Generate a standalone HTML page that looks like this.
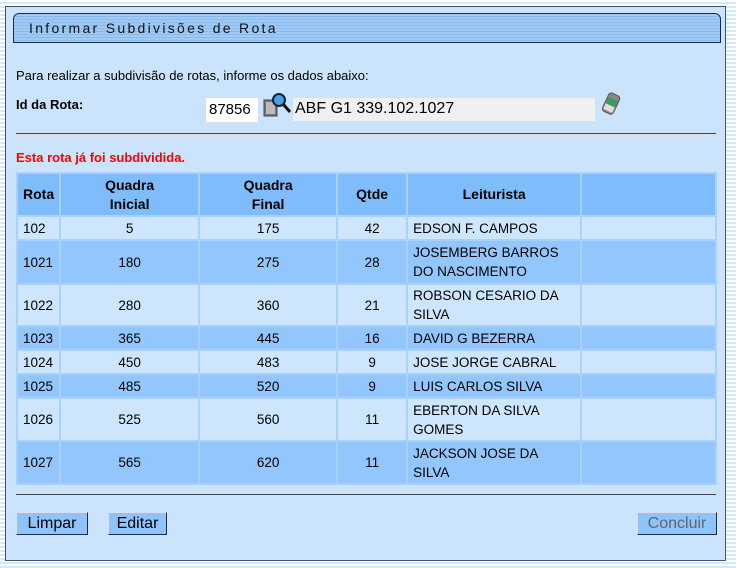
<!DOCTYPE html>
<html><head><meta charset="utf-8"><style>
*{margin:0;padding:0;box-sizing:border-box}
body{width:736px;height:568px;overflow:hidden;font-family:"Liberation Sans",Arial,sans-serif;font-size:13px;color:#000;
background:repeating-linear-gradient(#fff 0 2px,#d4e8fb 2px 4px);position:relative}
.panel{position:absolute;left:5px;top:6px;width:721px;height:555px;background:#cbe4fc;border:1px solid #3d5570}
.title{position:absolute;left:7px;top:6px;width:708px;height:30px;border:1px solid #1c2c40;border-radius:6px 6px 0 0;
background:repeating-linear-gradient(#9fcaf3 0 2px,#8bbbec 2px 3px);font-size:14px;letter-spacing:2.3px;padding:6px 0 0 15px;color:#111}
.abs{position:absolute}
.hr{position:absolute;left:10px;width:700px;height:2px;background:#444;border-bottom:1px solid #ddd}
table{position:absolute;left:10px;top:165px;width:701px;border-collapse:separate;border-spacing:2px;background:#a8d1fc}
td,th{font-size:13.5px;padding:0 5px}
th{background:#7ebcfc;height:41px;font-weight:bold;font-size:14px;line-height:19px}
tr.l td{background:#cde6fe}
tr.d td{background:#92c6fc}
td.c{text-align:center}
.btn{position:absolute;top:505px;height:23px;background:#8ec3fb;border:1px solid #1c2c50;border-top-color:#dde;border-left-color:#dde;font-size:16px;text-align:center;line-height:21px}
</style></head><body>
<div class="panel">
<div class="title">Informar Subdivisões de Rota</div>
<div class="abs" style="left:10px;top:61px">Para realizar a subdivisão de rotas, informe os dados abaixo:</div>
<div class="abs" style="left:10px;top:90px;font-weight:bold">Id da Rota:</div>
<div class="abs" style="left:200px;top:91px;width:52px;height:24px;background:#fff;font-size:15px;padding:3px 0 0 3px">87856</div>
<svg class="abs" style="left:256px;top:84px" width="32" height="28"><rect x="2" y="9" width="13" height="16" fill="#777" stroke="#444"/><rect x="4" y="11" width="9" height="12" fill="#bbb"/><circle cx="17" cy="9" r="6" fill="#4aa0d8" stroke="#124" stroke-width="2"/><line x1="21" y1="13" x2="28" y2="21" stroke="#111" stroke-width="3"/></svg>
<div class="abs" style="left:287px;top:91px;width:302px;height:23px;background:#f0f0f0;font-size:16px;padding:2px 0 0 2px">ABF G1 339.102.1027</div>
<svg class="abs" style="left:594px;top:84px" width="24" height="26"><g transform="rotate(25 12 13)"><rect x="5" y="3" width="12" height="20" rx="3" fill="#888" stroke="#555"/><rect x="6" y="8" width="10" height="7" fill="#3a9a60"/><rect x="6" y="15" width="10" height="6" fill="#ddd"/></g></svg>
<div class="hr" style="top:126px"></div>
<div class="abs" style="left:10px;top:143px;color:#f00;font-weight:bold">Esta rota já foi subdividida.</div>
<table>
<tr><th style="width:39px">Rota</th><th style="width:137px">Quadra<br>Inicial</th><th style="width:136px">Quadra<br>Final</th><th style="width:68px">Qtde</th><th style="width:172px">Leiturista</th><th></th></tr>
<tr class="l" style="height:22px"><td>102</td><td class="c">5</td><td class="c">175</td><td class="c">42</td><td>EDSON F. CAMPOS</td><td></td></tr>
<tr class="d" style="height:42px"><td>1021</td><td class="c">180</td><td class="c">275</td><td class="c">28</td><td style="line-height:19px">JOSEMBERG BARROS DO NASCIMENTO</td><td></td></tr>
<tr class="l" style="height:40px"><td>1022</td><td class="c">280</td><td class="c">360</td><td class="c">21</td><td style="line-height:19px">ROBSON CESARIO DA SILVA</td><td></td></tr>
<tr class="d" style="height:22px"><td>1023</td><td class="c">365</td><td class="c">445</td><td class="c">16</td><td>DAVID G BEZERRA</td><td></td></tr>
<tr class="l" style="height:22px"><td>1024</td><td class="c">450</td><td class="c">483</td><td class="c">9</td><td>JOSE JORGE CABRAL</td><td></td></tr>
<tr class="d" style="height:22px"><td>1025</td><td class="c">485</td><td class="c">520</td><td class="c">9</td><td>LUIS CARLOS SILVA</td><td></td></tr>
<tr class="l" style="height:41px"><td>1026</td><td class="c">525</td><td class="c">560</td><td class="c">11</td><td style="line-height:19px">EBERTON DA SILVA<br>GOMES</td><td></td></tr>
<tr class="d" style="height:41px"><td>1027</td><td class="c">565</td><td class="c">620</td><td class="c">11</td><td style="line-height:19px">JACKSON JOSE DA<br>SILVA</td><td></td></tr>
</table>
<div class="hr" style="top:487px"></div>
<div class="btn" style="left:10px;width:72px;top:505px">Limpar</div>
<div class="btn" style="left:102px;width:59px;top:505px">Editar</div>
<div class="btn" style="left:631px;width:80px;top:505px;color:#666">Concluir</div>
</div>
</body></html>
